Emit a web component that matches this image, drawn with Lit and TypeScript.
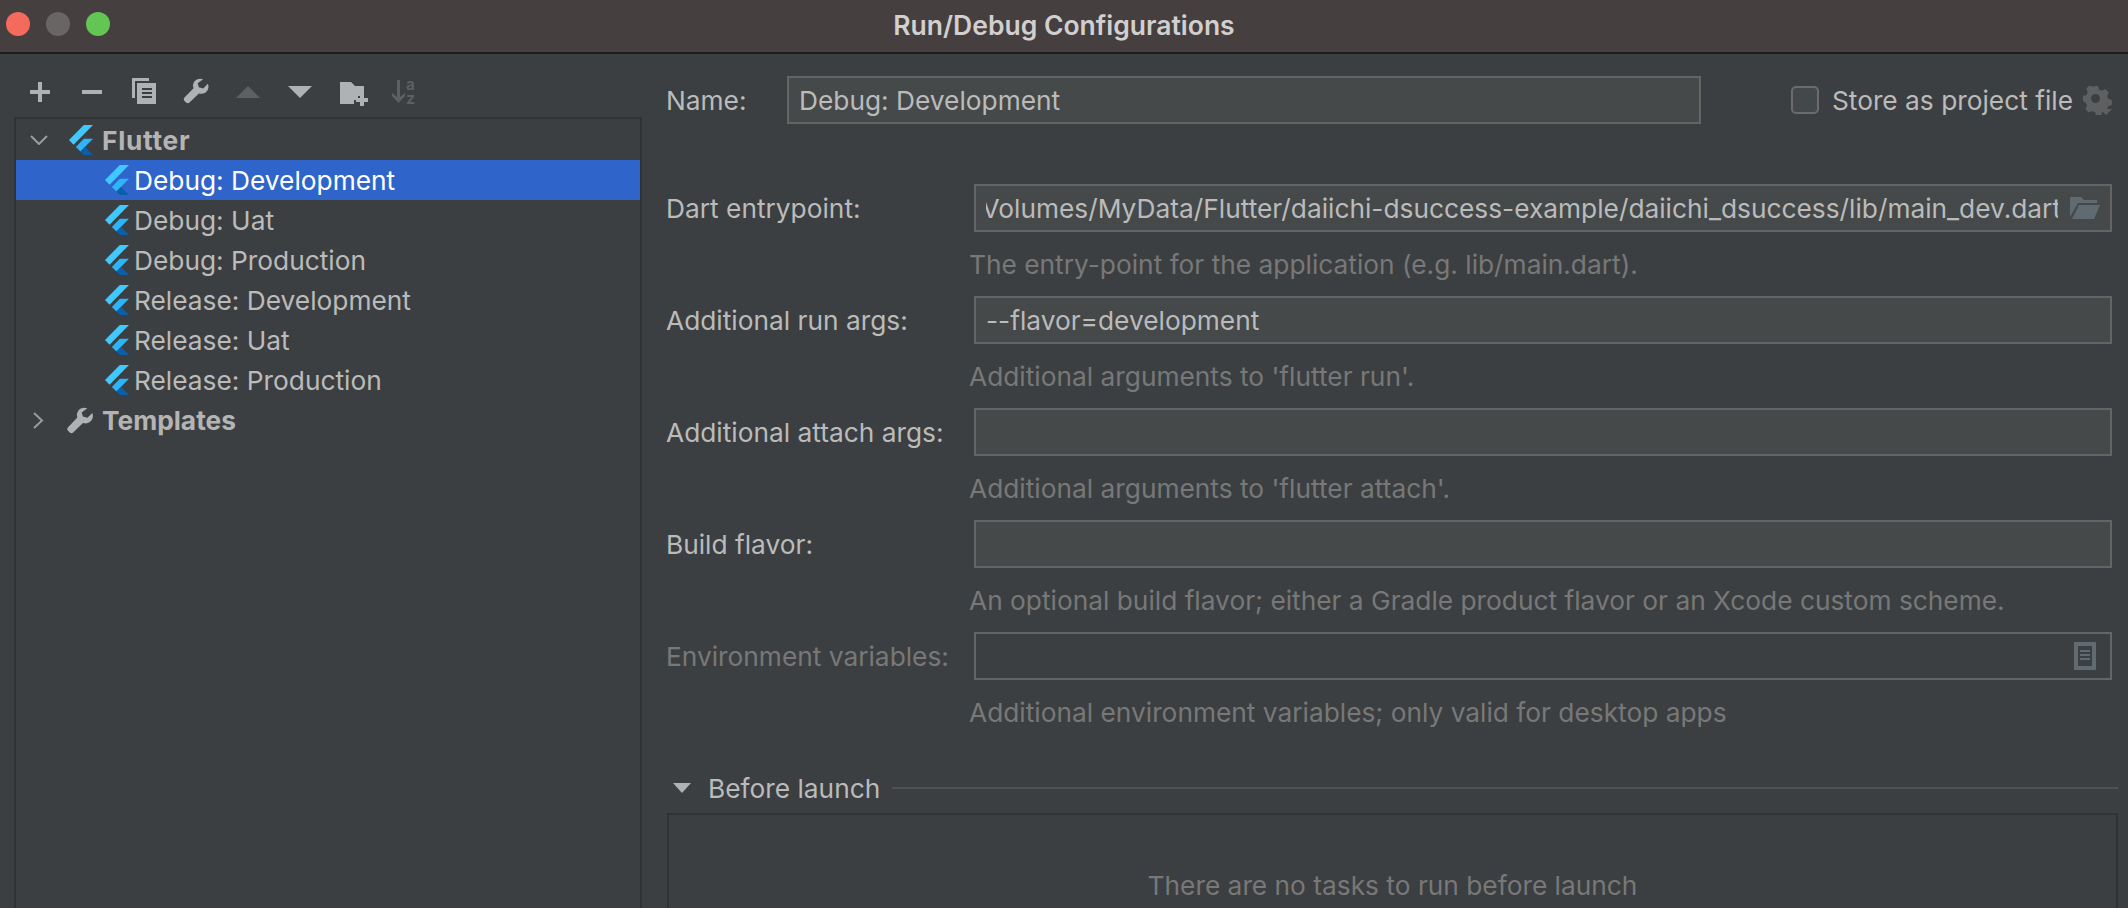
import { LitElement, html, css, svg } from 'lit';
import { customElement } from 'lit/decorators.js';

const flutter = html`<svg class="flutter" viewBox="2.3 0 19.4 24" preserveAspectRatio="none">
  <path fill="#40c9ff" d="M14.3 0 2.3 12 6 15.7 21.7 0z" />
  <path fill="#2fb4f5" d="M14.3 11.07 7.86 17.5l3.7 3.7L21.7 11.07z" />
  <path fill="#0b5ea8" d="M11.56 21.2 14.3 24h7.4l-6.44-6.5z" />
</svg>`;

const wrench = svg`<path d="M19.6 1.2c-3.2-1.3-7-.3-8.9 2.6-1.3 2-1.500 4.300-.7 6.400L1 19.600c-1 1-1 2.400 0 3.400l1.600 1.600c1 1 2.400 1 3.400 0l9.400-9.200c2.200.8 4.600.5 6.600-.9 2.800-2 3.700-5.600 2.400-8.700l-4.700 4.600-4.400-1.200-1.100-4z" />`;

interface Field {
  label: string;
  help: string;
  value?: string;
}

const fields: Field[] = [
  { label: 'Additional run args:', value: '--flavor=development', help: "Additional arguments to 'flutter run'." },
  { label: 'Additional attach args:', help: "Additional arguments to 'flutter attach'." },
  { label: 'Build flavor:', help: 'An optional build flavor; either a Gradle product flavor or an Xcode custom scheme.' },
];

const configs = [
  'Debug: Development',
  'Debug: Uat',
  'Debug: Production',
  'Release: Development',
  'Release: Uat',
  'Release: Production',
];

@customElement('app-root')
export class AppRoot extends LitElement {
  static styles = css`
    :host {
      display: flex;
      flex-direction: column;
      height: 908px;
      overflow: hidden;
      background: #3c3f41;
      color: #bbbbbb;
      font-family: Inter, "Noto Sans", sans-serif;
      font-size: 26.3px;
    }

    svg {
      display: block;
      flex: none;
    }

    label {
      margin-left: -1px;
    }

    .titlebar {
      position: relative;
      display: flex;
      align-items: center;
      justify-content: center;
      height: 52px;
      box-sizing: content-box;
      flex: none;
      background: #453f40;
      border-bottom: 2px solid #1c1c1c;
      font-weight: 600;
      font-size: 26.5px;
      color: #d2cfcf;
    }

    .titlebar .title {
      margin-bottom: 3px;
    }

    .lights {
      position: absolute;
      left: 6px;
      top: 12px;
      display: flex;
      gap: 16px;
    }

    .lights span {
      width: 24px;
      height: 24px;
      border-radius: 50%;
    }

    .main {
      flex: 1;
      display: flex;
      min-height: 0;
    }

    .left {
      width: 642px;
      flex: none;
      padding-left: 14px;
      box-sizing: border-box;
      display: flex;
      flex-direction: column;
    }

    .toolbar {
      height: 63px;
      flex: none;
      position: relative;
    }

    .toolbar svg {
      position: absolute;
      overflow: visible;
    }

    .tree {
      flex: 1;
      border: 2px solid #313233;
      border-bottom: none;
      padding-top: 1px;
    }

    .row {
      display: flex;
      align-items: center;
      height: 40px;
      white-space: nowrap;
    }

    .row.group {
      font-weight: 700;
      color: #b4b4b4;
    }

    .row.child {
      padding-left: 89px;
      gap: 5px;
    }

    .row.selected {
      background: #2f65ca;
      color: #ffffff;
    }

    .flutter {
      width: 24px;
      height: 30px;
    }

    .flutter-name {
      letter-spacing: 0.7px;
    }

    .arrow {
      width: 32px;
      box-sizing: border-box;
      display: flex;
      justify-content: flex-end;
      margin-right: 21px;
    }

    .arrow.closed {
      padding-right: 4px;
    }

    .group-icon {
      width: 33px;
      flex: none;
    }

    .group-icon.tool {
      margin-left: -2px;
      width: 35px;
    }

    .right {
      flex: 1;
      padding: 22px 10px 0 25px;
      min-width: 0;
    }

    .name-row {
      display: flex;
      align-items: center;
      height: 48px;
      padding-right: 6px;
    }

    .name-row label {
      width: 120px;
      flex: none;
    }

    .name-row .input {
      width: 914px;
      flex: none;
      margin-left: 1px;
    }

    .store {
      margin-left: auto;
      display: flex;
      align-items: center;
      white-space: nowrap;
    }

    .checkbox {
      width: 24px;
      height: 24px;
      border: 2px solid #6b6b6b;
      border-radius: 5px;
      background: #43494a;
      margin-right: 13px;
    }

    .gear {
      margin-left: 10px;
    }

    .input {
      height: 48px;
      box-sizing: border-box;
      border: 2px solid #646464;
      background: #45494a;
      display: flex;
      align-items: center;
      padding: 0 10px;
      min-width: 0;
      white-space: nowrap;
    }

    .input.off {
      background: transparent;
      justify-content: flex-end;
      padding-right: 14px;
    }

    .form {
      display: grid;
      grid-template-columns: 307px 1fr;
      margin-top: 60px;
      padding-right: 6px;
      align-items: center;
    }

    .path {
      flex: 1;
      min-width: 0;
      overflow: hidden;
      display: flex;
      justify-content: flex-end;
      white-space: nowrap;
      margin-right: 12px;
    }

    .path span {
      flex: none;
      margin-right: -3px;
    }

    .help {
      grid-column: 2;
      height: 64px;
      line-height: 66px;
      margin-left: -5px;
      color: #787878;
      white-space: nowrap;
    }

    .dim {
      color: #787878;
    }

    .section {
      display: flex;
      align-items: center;
      height: 40px;
      margin-top: 24px;
    }

    .section svg {
      margin: 0 17px 0 6px;
    }

    .section i {
      flex: 1;
      height: 2px;
      background: #515151;
      margin-left: 12px;
    }

    .tasks {
      margin-top: 5px;
      height: 160px;
      box-sizing: border-box;
      border: 2px solid #313233;
      display: flex;
      justify-content: center;
      padding-top: 55px;
      color: #787878;
    }
  `;

  private _toolbar() {
    return html`<div class="toolbar">
      <svg style="left:16px;top:28px" width="20" height="20" fill="#afb1b3"><path d="M8 0h4v8h8v4h-8v8H8v-8H0V8h8z" /></svg>
      <svg style="left:68px;top:36px" width="20" height="4" fill="#afb1b3"><rect width="20" height="4" /></svg>
      <svg style="left:118px;top:24px" width="24" height="26" fill="#afb1b3">
        <path d="M0 0h17v3H3v17H0z" />
        <path fill-rule="evenodd" d="M5 5h19v21H5zM10 10v2h10v-2zM10 14v2h10v-2zM10 18v2h10v-2z" />
      </svg>
      <svg style="left:169px;top:24px" width="28" height="26" viewBox="0 0 27 26" fill="#afb1b3">${wrench}</svg>
      <svg style="left:222px;top:32px" width="24" height="12" fill="#5f6061"><path d="M12 0l12 12H0z" /></svg>
      <svg style="left:274px;top:32px" width="24" height="12" fill="#afb1b3"><path d="M0 0h24L12 12z" /></svg>
      <svg style="left:326px;top:28px" width="28" height="24" fill="#afb1b3">
        <path d="M0 0h11l4 4h9v10h-6v4h-4v4H0z" />
        <path d="M20 12h4v4h4v4h-4v4h-4v-4h-4v-4h4z" />
      </svg>
      <svg style="left:376px;top:26px" width="28" height="25" fill="#5d5f60">
        <path d="M7 0h3v17l5-4v3l-6.500 7L2 16v-3l5 4z" />
        <text x="16" y="10" font-size="15" font-weight="700" font-family="Inter, sans-serif">a</text>
        <text x="16" y="24" font-size="16" font-weight="700" font-family="Inter, sans-serif">z</text>
      </svg>
    </div>`;
  }

  private _tree() {
    return html`<div class="tree">
      <div class="row group">
        <div class="arrow"><svg width="18" height="10" fill="none" stroke="#9a9b9c" stroke-width="2"><path d="M1 1l8 8 8-8" /></svg></div>
        <div class="group-icon">${flutter}</div>
        <span class="flutter-name">Flutter</span>
      </div>
      ${configs.map(
        (c, i) => html`<div class="row child ${i === 0 ? 'selected' : ''}">${flutter}<span>${c}</span></div>`
      )}
      <div class="row group">
        <div class="arrow closed"><svg width="11" height="17" fill="none" stroke="#9a9b9c" stroke-width="2"><path d="M1 1l8 7.500-8 7.500" /></svg></div>
        <div class="group-icon tool"><svg width="28" height="27" viewBox="0 0 27 26" fill="#afb1b3">${wrench}</svg></div>
        Templates
      </div>
    </div>`;
  }

  private _form() {
    return html`<div class="form">
      <label>Dart entrypoint:</label>
      <div class="input">
        <div class="path"><span>/Volumes/MyData/Flutter/daiichi-dsuccess-example/daiichi_dsuccess/lib/main_dev.dart</span></div>
        <svg width="30" height="22" viewBox="0 0 30 22" fill="#5f6b71">
          <path d="M0 20V0h11l3 3h13v3H8z" />
          <path d="M9 8h21l-6 14H2z" />
        </svg>
      </div>
      <div class="help">The entry-point for the application (e.g. lib/main.dart).</div>
      ${fields.map(
        f => html`<label>${f.label}</label>
          <div class="input">${f.value ?? ''}</div>
          <div class="help">${f.help}</div>`
      )}
      <label class="dim">Environment variables:</label>
      <div class="input off">
        <svg width="22" height="28" fill="#5f6b71">
          <path fill-rule="evenodd" d="M0 0h22v28H0zM4 4v20h14V4zM6 8h10v2H6zM6 12h10v2H6zM6 16h10v2H6z" />
        </svg>
      </div>
      <div class="help">Additional environment variables; only valid for desktop apps</div>
    </div>`;
  }

  render() {
    return html`
      <div class="titlebar">
        <div class="lights">
          <span style="background:#f46b5d"></span>
          <span style="background:#6a6565"></span>
          <span style="background:#62c554"></span>
        </div>
        <span class="title">Run/Debug Configurations</span>
      </div>
      <div class="main">
        <div class="left">${this._toolbar()} ${this._tree()}</div>
        <div class="right">
          <div class="name-row">
            <label>Name:</label>
            <div class="input">Debug: Development</div>
            <div class="store">
              <div class="checkbox"></div>
              Store as project file
              <svg class="gear" width="29" height="29" viewBox="0 0 29 29" fill="#5d5f60">
                <path fill-rule="evenodd" d="M10 0h5l1 3.500 3 1.300 3.300-1.700 3.500 3.500-1.700 3.300 1.300 3 3.500 1v5l-3.500 1-1.300 3-2 2-3 1.300-1 3.500h-5l-1-3.500-3-1.300-3.300 1.700-3.500-3.500 1.700-3.300-1.300-3L0 15v-5l3.500-1 1.300-3-1.700-3.300 3.500-3.500 3.300 1.700 3-1.300zM12.500 8a4.500 4.500 0 1 0 0 9 4.500 4.500 0 0 0 0-9z" />
                <path d="M17 23h12l-6 6z" />
              </svg>
            </div>
          </div>
          ${this._form()}
          <div class="section">
            <svg width="18" height="10" fill="#afb1b3"><path d="M0 0h18L9 10z" /></svg>
            Before launch
            <i></i>
          </div>
          <div class="tasks">There are no tasks to run before launch</div>
        </div>
      </div>
    `;
  }
}
